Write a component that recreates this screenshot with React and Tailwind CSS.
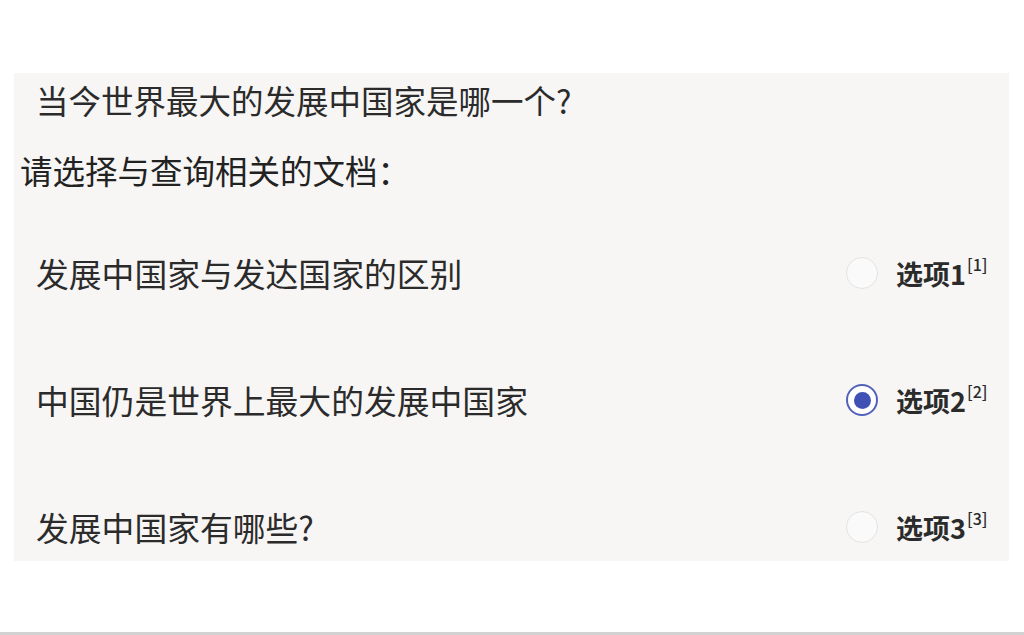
import React, { useState } from "react";

const FONT = { fontFamily: '"Noto Sans CJK SC", "Noto Sans", sans-serif' };

const OPTIONS = [
  { id: 1, text: "发展中国家与发达国家的区别", label: "选项1", ref: "[1]" },
  { id: 2, text: "中国仍是世界上最大的发展中国家", label: "选项2", ref: "[2]" },
  { id: 3, text: "发展中国家有哪些?", label: "选项3", ref: "[3]" },
];

function Radio({ checked }) {
  return checked ? (
    <span className="w-[32px] h-[32px] rounded-full border-2 border-[#5262b9] bg-white flex items-center justify-center shrink-0">
      <span className="w-[17px] h-[17px] rounded-full bg-[#3f51b5]" />
    </span>
  ) : (
    <span className="w-[32px] h-[32px] rounded-full border-[1.5px] border-[#e4e3e1] bg-[#fafafa] shrink-0" />
  );
}

export default function App() {
  const [selected, setSelected] = useState(2);

  return (
    <div style={FONT} className="h-[635px] bg-white border-b-[3px] border-[#d2d2d2] pt-[73px] text-[#2b2b2b]">
      <div className="mx-[14px] mr-[15px] bg-[#f7f6f5] pt-[3px] pb-[10px]">
        <div className="h-[48px] flex items-center pl-[22px] text-[32.5px]">
          当今世界最大的发展中国家是哪一个?
        </div>
        <div className="h-[48px] mt-[22px] flex items-center pl-[6px] text-[32.5px] font-normal text-[#222]">
          请选择与查询相关的文档：
        </div>

        <div className="mt-[55px] flex flex-col gap-[79px]">
          {OPTIONS.map((o) => (
            <div key={o.id} className="h-[48px] flex items-center" onClick={() => setSelected(o.id)}>
              <div className="flex-1 pl-[22px] text-[32.8px]">{o.text}</div>
              <div className="w-[163px] flex items-center gap-[18px]">
                <Radio checked={selected === o.id} />
                <div className="flex items-start font-bold text-[27px] leading-none">
                  <span>{o.label}</span>
                  <span className="text-[16px] font-medium ml-[1px] -mt-[4px]">{o.ref}</span>
                </div>
              </div>
            </div>
          ))}
        </div>
      </div>
    </div>
  );
}
